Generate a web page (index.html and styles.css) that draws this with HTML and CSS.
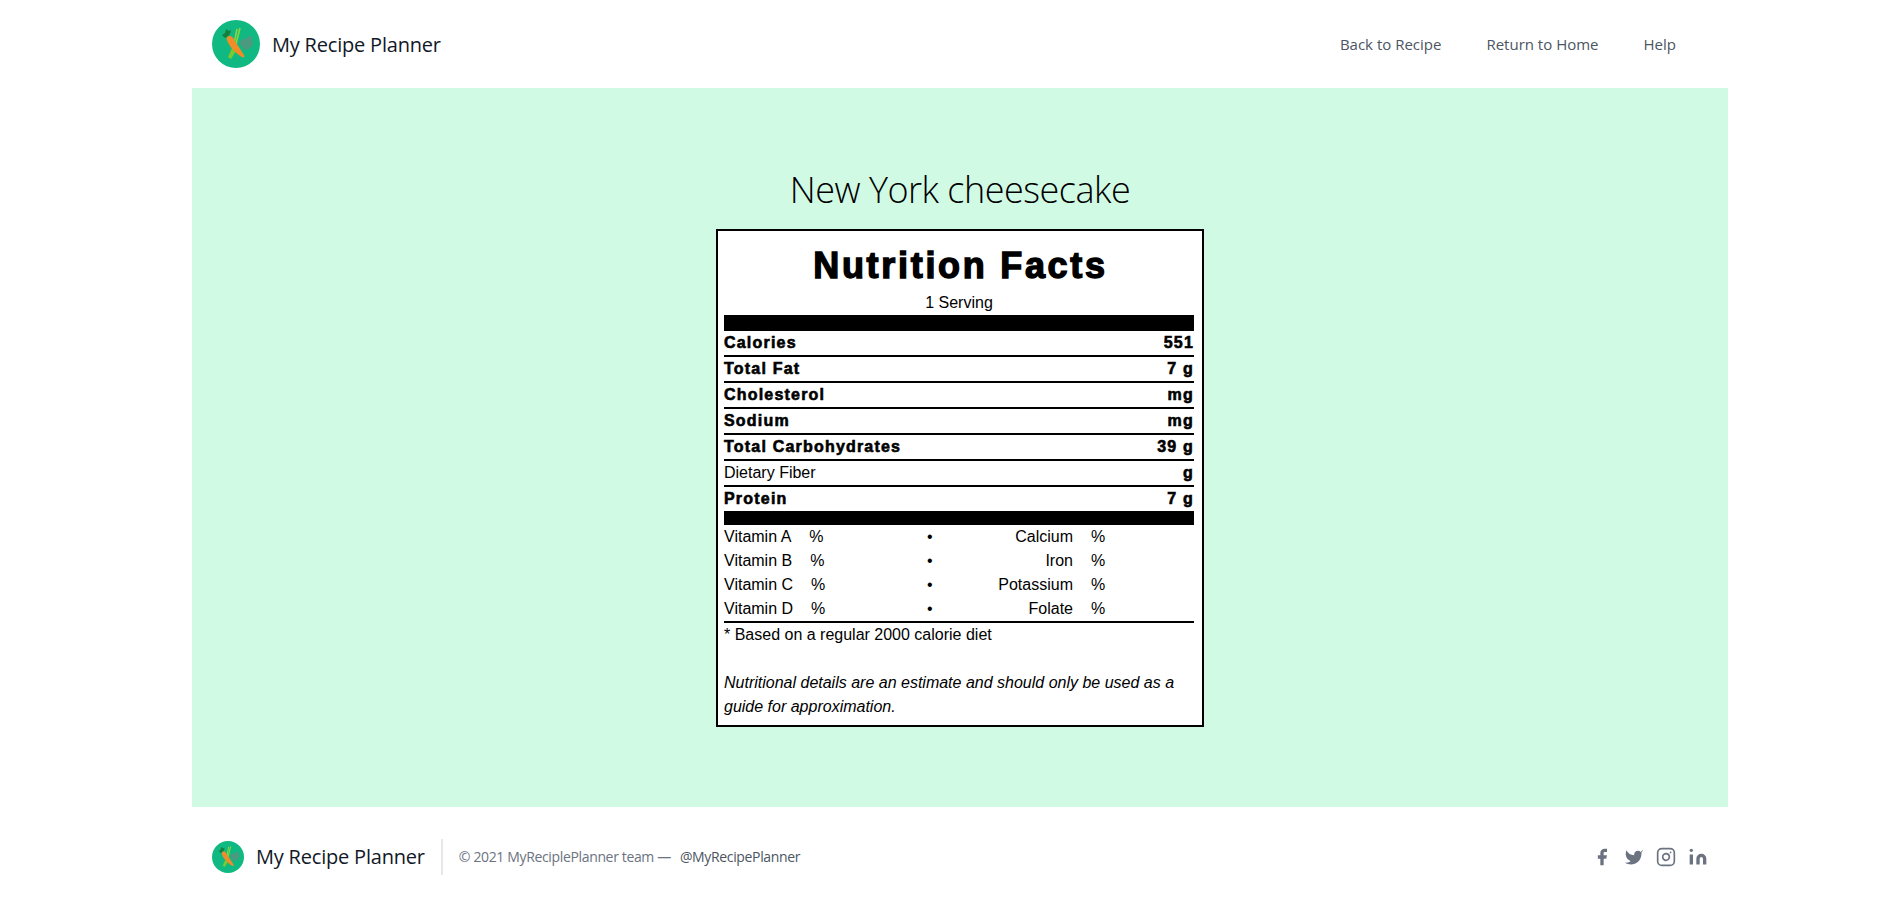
FILE: index.html
```html
<!DOCTYPE html>
<html lang="en">
  <head>
    <meta charset="UTF-8" />
    <meta name="viewport" content="width=device-width, initial-scale=1.0" />
    <title>Nutrition Facts</title>
    <link rel="stylesheet" href="styles.css">
  </head>
  <body>
    <header class="site-header">
      <a class="brand" href="#">
        <svg class="brand-logo" viewBox="0 0 48 48">
          <circle cx="24" cy="24" r="24" fill="#10b981" />
          <path d="M27 22l4-3 4-1 2-3 3 3 1 6-4 5-5 1z" fill="#4b9a80" />
          <path d="M22 24L25 9M24 24L28 8" stroke="#8bd63f" stroke-width="1.6" fill="none" />
          <path d="M10 15l3-2 1-4 3 2 2-1-1 4-3 3-2 1z" fill="#15803d" />
          <path d="M20 28l-4 9 3 2 5-8z" fill="#7ac92e" />
          <path d="M15 17c2-2 5-1 6 1l11 17c1 2 0 3-2 2-4-2-9-7-12-11-2-3-4-7-3-9z" fill="#f28c28" />
        </svg>
        <span class="brand-name">My Recipe Planner</span>
      </a>
      <nav class="site-nav">
        <a href="#">Back to Recipe</a>
        <a href="#">Return to Home</a>
        <a href="#">Help</a>
      </nav>
    </header>

    <main class="content">
      <h1 class="recipe-title">New York cheesecake</h1>
      <section class="label">
        <h2 class="label-title">Nutrition Facts</h2>
        <p class="label-serving">1 Serving</p>
        <div class="bar bar-top"></div>
        <div class="row"><span>Calories</span><span>551</span></div>
        <div class="row"><span>Total Fat</span><span>7 g</span></div>
        <div class="row"><span>Cholesterol</span><span>mg</span></div>
        <div class="row"><span>Sodium</span><span>mg</span></div>
        <div class="row"><span>Total Carbohydrates</span><span>39 g</span></div>
        <div class="row"><span class="row-light">Dietary Fiber</span><span>g</span></div>
        <div class="row row-last"><span>Protein</span><span>7 g</span></div>
        <div class="bar bar-bottom"></div>
        <div class="vitamins">
          <div class="vit-row"><span>Vitamin A<span class="vit-pct">%</span></span><span>•</span><span class="vit-min">Calcium</span><span class="vit-pct-right">%</span></div>
          <div class="vit-row"><span>Vitamin B<span class="vit-pct">%</span></span><span>•</span><span class="vit-min">Iron</span><span class="vit-pct-right">%</span></div>
          <div class="vit-row"><span>Vitamin C<span class="vit-pct">%</span></span><span>•</span><span class="vit-min">Potassium</span><span class="vit-pct-right">%</span></div>
          <div class="vit-row"><span>Vitamin D<span class="vit-pct">%</span></span><span>•</span><span class="vit-min">Folate</span><span class="vit-pct-right">%</span></div>
        </div>
        <p class="label-note">* Based on a regular 2000 calorie diet</p>
        <p class="label-small">Nutritional details are an estimate and should only be used as a guide for approximation.</p>
      </section>
    </main>

    <footer class="site-footer">
      <a class="brand" href="#">
        <svg class="brand-logo-small" viewBox="0 0 48 48">
          <circle cx="24" cy="24" r="24" fill="#10b981" />
          <path d="M27 22l4-3 4-1 2-3 3 3 1 6-4 5-5 1z" fill="#4b9a80" />
          <path d="M22 24L25 9M24 24L28 8" stroke="#8bd63f" stroke-width="1.6" fill="none" />
          <path d="M10 15l3-2 1-4 3 2 2-1-1 4-3 3-2 1z" fill="#15803d" />
          <path d="M20 28l-4 9 3 2 5-8z" fill="#7ac92e" />
          <path d="M15 17c2-2 5-1 6 1l11 17c1 2 0 3-2 2-4-2-9-7-12-11-2-3-4-7-3-9z" fill="#f28c28" />
        </svg>
        <span class="brand-name">My Recipe Planner</span>
      </a>
      <p class="copyright">© 2021 MyReciplePlanner team — <a href="#">@MyRecipePlanner</a></p>
      <div class="socials">
        <svg viewBox="0 0 24 24" fill="currentColor"><path d="M18 2h-3a5 5 0 00-5 5v3H7v4h3v8h4v-8h3l1-4h-4V7a1 1 0 011-1h3z" /></svg>
        <svg viewBox="0 0 24 24" fill="currentColor"><path d="M23 3a10.9 10.9 0 01-3 3 4.5 4.5 0 00-7.86 3v1A10.66 10.66 0 013 4s-4 9 5 13a11.64 11.64 0 01-7 2c9 5 20 0 20-11.5a4.5 4.5 0 00-.08-.83A7.72 7.72 0 0023 3z" /></svg>
        <svg viewBox="0 0 24 24" fill="none" stroke="currentColor" stroke-width="2" stroke-linecap="round" stroke-linejoin="round"><rect width="20" height="20" x="2" y="2" rx="5" ry="5" /><path d="M16 11.37A4 4 0 1112.63 8 4 4 0 0116 11.37zm1.5-4.87h.01" /></svg>
        <svg viewBox="0 0 24 24" fill="currentColor"><path d="M16 8a6 6 0 016 6v7h-4v-7a2 2 0 00-2-2 2 2 0 00-2 2v7h-4v-7a6 6 0 016-6zM2 9h4v12H2z" /><circle cx="4" cy="4" r="2" /></svg>
      </div>
    </footer>
  </body>
</html>
```

FILE: styles.css
```css
* {
  box-sizing: border-box;
}

html {
  overflow: hidden;
}

body {
  margin: 0 0 0 192px;
  width: 1536px;
  background-color: #fff;
  font-family: "Open Sans", "Noto Sans", sans-serif;
  font-size: 16px;
  line-height: 24px;
  color: #6b7280;
}

a {
  color: inherit;
  text-decoration: none;
}

.site-header {
  display: flex;
  justify-content: space-between;
  align-items: center;
  padding: 20px;
}

.site-header .brand-name {
  margin-top: 2px;
}

.brand {
  display: flex;
  align-items: center;
  color: #111827;
}

.brand-logo {
  width: 48px;
  height: 48px;
}

.brand-logo-small {
  width: 32px;
  height: 32px;
}

.brand-name {
  margin-left: 12px;
  font-size: 20px;
  line-height: 28px;
  font-weight: 500;
  letter-spacing: -0.2px;
}

.site-nav {
  display: flex;
  gap: 45px;
  padding-right: 32px;
  color: #4b5563;
  font-size: 15px;
}

.content {
  display: flex;
  flex-direction: column;
  align-items: center;
  height: 719px;
  padding-top: 80px;
  background-color: #d1fae5;
}

.recipe-title {
  margin: 0 0 17px;
  font-size: 36px;
  line-height: 44px;
  font-weight: 300;
  letter-spacing: -0.5px;
  color: #000;
}

.label {
  width: 488px;
  height: 498px;
  padding: 10px 8px 0 6px;
  border: 2px solid #000;
  background-color: #fff;
  font-family: "Liberation Sans", Arial, sans-serif;
  color: #000;
}

.label-title {
  margin: 0;
  padding-left: 3px;
  text-align: center;
  font-size: 36px;
  line-height: 50px;
  font-weight: 700;
  letter-spacing: 2.7px;
  -webkit-text-stroke: 1.4px #000;
}

.label-serving {
  margin: 0;
  text-align: center;
  line-height: 24px;
}

.bar {
  background-color: #000;
}

.bar-top {
  height: 16px;
}

.bar-bottom {
  height: 14px;
}

.row {
  display: flex;
  justify-content: space-between;
  height: 26px;
  border-bottom: 2px solid #000;
  font-weight: 700;
  letter-spacing: 1.2px;
  -webkit-text-stroke: 0.6px #000;
}

.row-last {
  height: 24px;
  border-bottom: 0;
}

.row-light {
  font-weight: 400;
  letter-spacing: 0;
  -webkit-text-stroke: 0;
}

.vitamins {
  border-bottom: 2px solid #000;
}

.vit-row {
  display: grid;
  grid-template-columns: 203px 6px 140px 1fr;
  height: 24px;
  line-height: 24px;
}

.vit-pct {
  margin-left: 18px;
}

.vit-pct-right {
  margin-left: 18px;
}

.vit-min {
  text-align: right;
}

.label-note {
  margin: 0 0 24px;
}

.label-small {
  margin: 0;
  font-style: italic;
}

.site-footer {
  display: flex;
  align-items: center;
  padding: 32px 20px;
}

.copyright {
  display: flex;
  align-items: center;
  gap: 9px;
  height: 36px;
  margin: 0 0 0 16px;
  padding-left: 16px;
  border-left: 2px solid #e5e7eb;
  font-size: 14px;
  line-height: 20px;
  letter-spacing: -0.35px;
}

.copyright a {
  color: #4b5563;
}

.socials {
  display: flex;
  gap: 12px;
  margin-left: auto;
  color: #6b7280;
}

.socials svg {
  width: 20px;
  height: 20px;
}
```
